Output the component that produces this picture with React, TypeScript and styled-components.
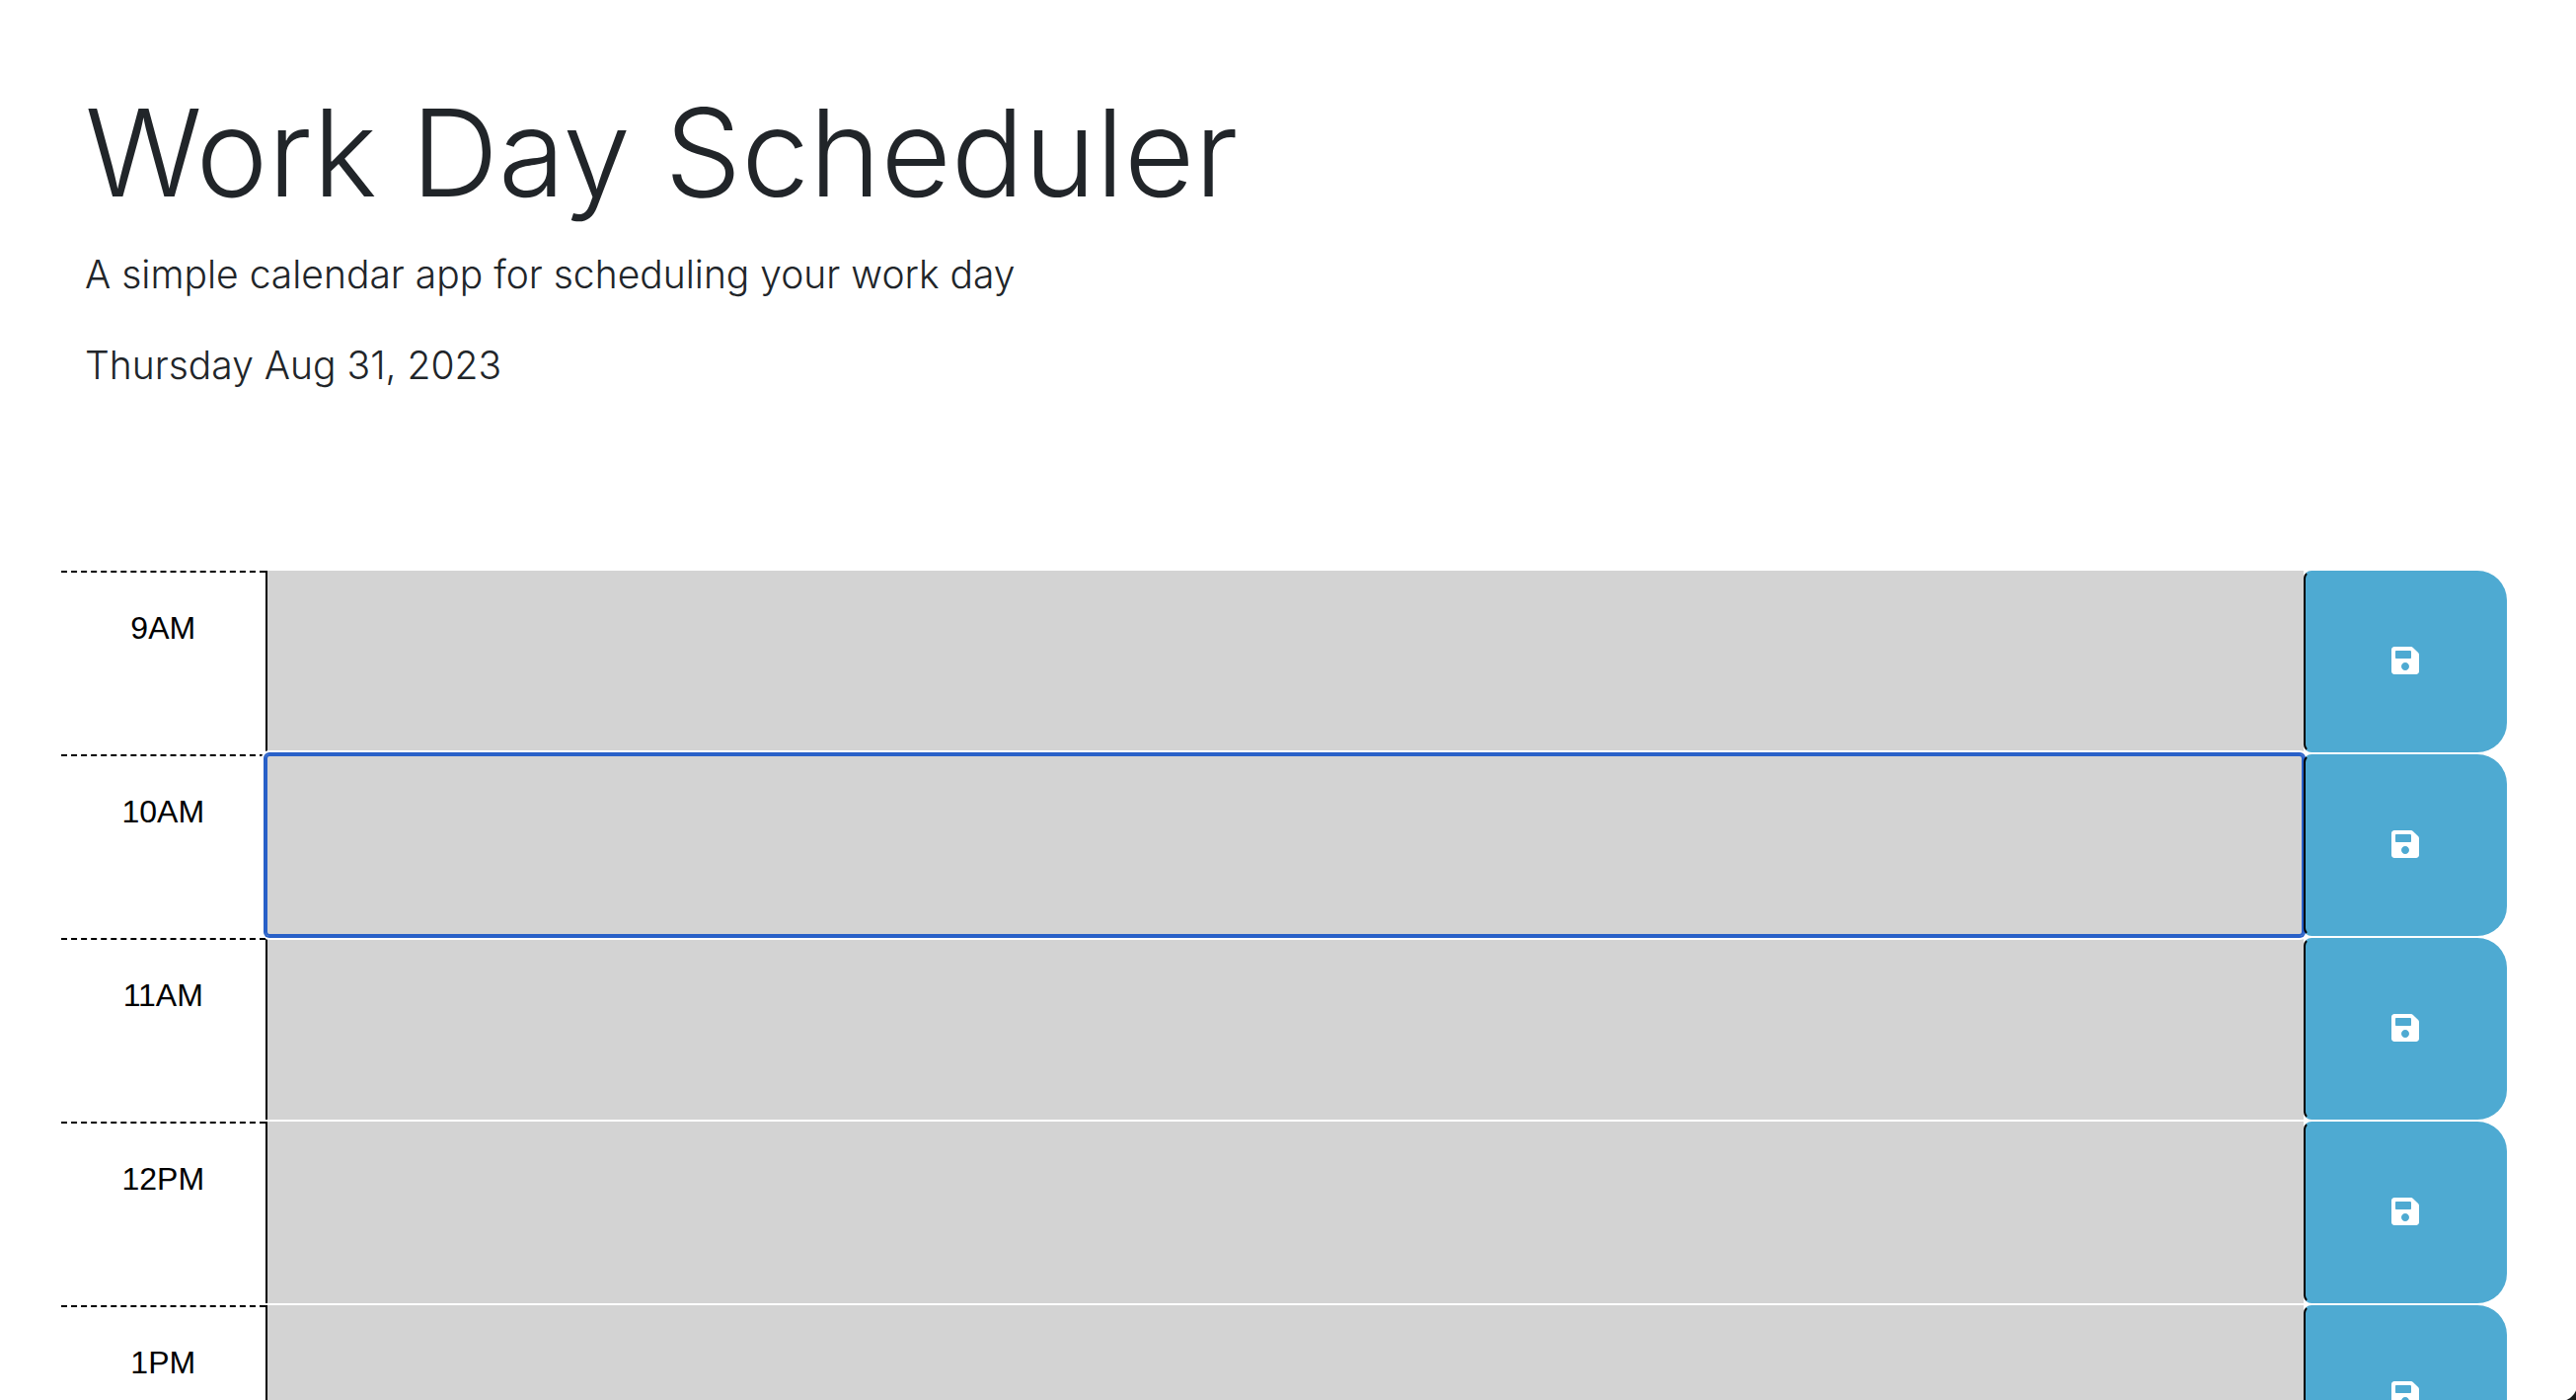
import React from "react";
import styled, { createGlobalStyle } from "styled-components";
import { FaSave } from "react-icons/fa";

const GlobalStyle = createGlobalStyle`
  *, *::before, *::after {
    box-sizing: border-box;
  }
  html {
    scrollbar-width: none;
  }
  body {
    margin: 0;
    background: #fff;
    color: #212529;
    font-family: "Liberation Sans", Arial, sans-serif;
    font-size: 32px;
    line-height: 48px;
  }
`;

const Header = styled.header`
  padding: 77px 86px 178px;
  font-family: Inter, "Liberation Sans", sans-serif;
  font-weight: 330;
`;

const Title = styled.h1`
  margin: 0 0 16px;
  font-size: 123px;
  font-weight: 330;
  line-height: 155px;
`;

const Lead = styled.p`
  margin: 0;
  font-size: 39px;
  line-height: 60px;

  & + & {
    margin-top: 32px;
  }
`;

const Schedule = styled.main`
  display: flex;
  flex-direction: column;
  gap: 2px;
  padding: 0 70px 0 62px;
`;

const TimeBlock = styled.section`
  display: grid;
  grid-template-columns: 1fr 10fr 1fr;
  height: 184px;
`;

const Hour = styled.label`
  position: relative;
  padding-top: 32px;
  border-top: 2px dashed #000;
  color: #000;
  text-align: center;
`;

const Description = styled.textarea`
  display: block;
  width: 100%;
  height: 100%;
  margin: 0;
  padding: 4px;
  border: 0;
  border-left: 2px solid #000;
  border-radius: 0;
  background: #d3d3d3;
  color: #000;
  font: inherit;
  resize: none;
  outline: none;

  &:focus {
    position: relative;
    padding-left: 6px;
    border-left-width: 0;
    border-radius: 4px;
    caret-color: transparent;
    box-shadow:
      inset 0 0 0 2px #2860c8,
      0 0 0 2px #2860c8,
      0 0 0 4px #fff;
  }
`;

const SaveButton = styled.button`
  position: relative;
  display: flex;
  align-items: center;
  justify-content: center;
  padding: 0 0 2px;
  border: 2px solid transparent;
  border-left-color: #000;
  border-radius: 8px 30px 30px 8px;
  background: #4eaad2;
  color: #fff;
  font-size: 32px;
  cursor: pointer;
`;

const WindowCorner = styled.div`
  position: fixed;
  right: 0;
  bottom: 0;
  width: 10px;
  height: 10px;
  background: radial-gradient(circle at -7px -7px, transparent 18px, #1a1a1a 19px);
`;

const hours = ["9AM", "10AM", "11AM", "12PM", "1PM"];

export default function App() {
  return (
    <>
      <GlobalStyle />
      <Header>
        <Title>Work Day Scheduler</Title>
        <Lead>A simple calendar app for scheduling your work day</Lead>
        <Lead>Thursday Aug 31, 2023</Lead>
      </Header>
      <Schedule>
        {hours.map((hour) => (
          <TimeBlock key={hour}>
            <Hour htmlFor={`hour-${hour}`}>{hour}</Hour>
            <Description id={`hour-${hour}`} autoFocus={hour === "10AM"} />
            <SaveButton type="button" aria-label="save">
              <FaSave aria-hidden="true" />
            </SaveButton>
          </TimeBlock>
        ))}
      </Schedule>
      <WindowCorner />
    </>
  );
}
